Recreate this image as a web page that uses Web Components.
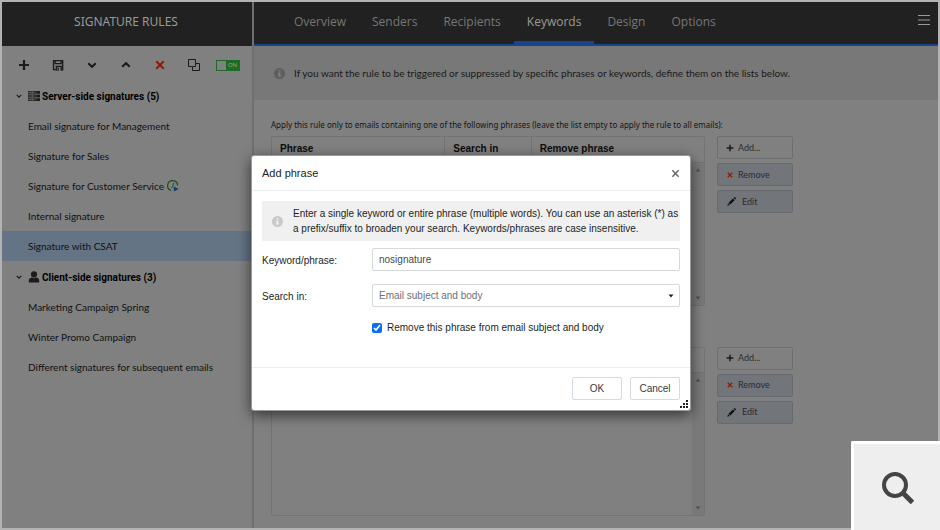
<!DOCTYPE html>
<html lang="en">
<head>
<meta charset="utf-8">
<title>Signature rules</title>
<style>
html, body { margin: 0; }
body { font-family: Lato, "Open Sans", sans-serif; font-size: 10px; line-height: 15px; color: #121212; background: #808080; }
</style>
</head>
<body>
<app-shell>
  <rules-sidebar slot="side" heading="SIGNATURE RULES">
    <rule-group heading="Server-side signatures (5)" icon="server">
      <rule-item>Email signature for Management</rule-item>
      <rule-item>Signature for Sales</rule-item>
      <rule-item icon="timer">Signature for Customer Service</rule-item>
      <rule-item>Internal signature</rule-item>
      <rule-item selected>Signature with CSAT</rule-item>
    </rule-group>
    <rule-group heading="Client-side signatures (3)" icon="person">
      <rule-item>Marketing Campaign Spring</rule-item>
      <rule-item>Winter Promo Campaign</rule-item>
      <rule-item>Different signatures for subsequent emails</rule-item>
    </rule-group>
  </rules-sidebar>
  <tab-bar>
    <tab-link>Overview</tab-link><tab-link>Senders</tab-link><tab-link>Recipients</tab-link><tab-link active>Keywords</tab-link><tab-link>Design</tab-link><tab-link>Options</tab-link>
  </tab-bar>
  <info-strip>If you want the rule to be triggered or suppressed by specific phrases or keywords, define them on the lists below.</info-strip>
  <phrase-section>Apply this rule only to emails containing one of the following phrases (leave the list empty to apply the rule to all emails):</phrase-section>
  <phrase-section></phrase-section>
  <phrase-dialog slot="over"></phrase-dialog>
  <zoom-corner slot="over"></zoom-corner>
</app-shell>

<script>
const define = (name, html, setup) => {
  const template = document.createElement('template');
  template.innerHTML = html;
  customElements.define(name, class extends HTMLElement {
    constructor() {
      super();
      this.attachShadow({ mode: 'open' }).append(template.content.cloneNode(true));
    }
    connectedCallback() { if (setup) setup(this, this.shadowRoot); }
  });
};

const icons = {
  plus: ['0 0 12 12', '<path d="M6 1v10M1 6h10" stroke="currentColor" stroke-width="2.2"/>'],
  save: ['0 0 12 12', '<path d="M3.500 10.700H1.500V1.700h9.200v9.200H9.400M3.200 1.500v3.200h5.900V1.500M4.300 11.700V7.300h4.900v4.400M6.200 8.500v3.200" fill="none" stroke="currentColor" stroke-width="1.3"/>'],
  down: ['0 0 10 10', '<path d="M1.2 3.2 5 6.8l3.800-3.6" fill="none" stroke="currentColor" stroke-width="2"/>'],
  up: ['0 0 10 10', '<path d="M1.2 6.800 5 3.2l3.800 3.6" fill="none" stroke="currentColor" stroke-width="2"/>'],
  cross: ['0 0 10 10', '<path d="m1.300 1.300 7.400 7.400m0-7.400-7.400 7.400" stroke="currentColor" stroke-width="2.200"/>'],
  thin: ['0 0 10 10', '<path d="m1.500 1.500 7 7m0-7-7 7" stroke="currentColor" stroke-width="1.600"/>'],
  copy: ['0 0 12 12', '<path d="M4.500 7.500h-4v-7h7v4M5 7.500H7.500V5M7.500 4.500h4v7h-7v-4" fill="none" stroke="currentColor" stroke-width="1"/>'],
  pencil: ['0 0 10 10', '<path d="M.3 9.700 1.200 7l1.900 1.900zM1.800 6.400l4.800-4.700 1.800 1.800-4.800 4.800zM7.200 1.100 8 .3q.5-.3 1 .1l.700.700q.4.500 0 1L9 2.900z" fill="currentColor"/>'],
  server: ['0 0 12 12', '<path d="M0 1h12v2.800H0zM0 4.600h12v2.800H0zM0 8.200h12V11H0z" fill="currentColor"/><path d="M.5 2.400h6M.5 6h6M.5 9.600h6" stroke="#808080" stroke-width="1.200" stroke-dasharray="1 .6"/><path d="M4.200 0v12M8 0v12" stroke="#6a6a6a" stroke-width=".6"/>'],
  person: ['0 0 12 12', '<circle cx="6" cy="3.400" r="3.100" fill="currentColor"/><path d="M.8 11.600V9.300q0-2.300 2.700-2.700 2.500 1.200 5 0 2.700.400 2.700 2.700v2.300z" fill="currentColor"/>'],
  timer: ['0 0 12 12', '<path d="M4 10.400A5 5 0 1 1 10.600 5.500" fill="none" stroke="#1b5225" stroke-width="1.300"/><path d="M6.800 3 5.600 6.500 4.300 8" fill="none" stroke="#1b5225" stroke-width="1"/><path d="M6.800 6.500 11.600 9l-4.800 2.600z" fill="#0d3a70"/>'],
  info: ['0 0 12 12', '<circle cx="6" cy="6" r="6" fill="currentColor"/><path d="M5.200 2.400h1.700v1.500H5.200zM4.500 4.900h2.400v3.300h.8v1.100H4.400V8.200h.8V6h-.7z" fill="var(--hole)"/>'],
  menu: ['0 0 12 12', '<path d="M0 1.500h12M0 6h12M0 10.500h12" stroke="currentColor" stroke-width="1.200"/>'],
  caretup: ['0 0 6 6', '<path d="M.5 4.500h5L3 1.500z" fill="currentColor"/>'],
  caretdown: ['0 0 6 6', '<path d="M.500 1.500h5l-2.500 3z" fill="currentColor"/>'],
  grip: ['0 0 8 8', '<path d="M6 0h2v2H6zM6 3h2v2H6zM3 3h2v2H3zM0 6h2v2H0zM3 6h2v2H3zM6 6h2v2H6z" fill="currentColor"/>'],
  search: ['0 0 32 32', '<circle cx="13" cy="13" r="11" fill="none" stroke="currentColor" stroke-width="4"/><path d="m20 20 10.500 10.500" stroke="currentColor" stroke-width="5"/>']
};
define('app-icon', `<style>
  :host { display: inline-block; width: 12px; height: 12px; flex: none; }
  svg { display: block; width: 100%; height: 100%; }
</style><svg aria-hidden="true"></svg>`, (el, root) => {
  const [box, body] = icons[el.getAttribute('name')];
  const svg = root.querySelector('svg');
  svg.setAttribute('viewBox', box);
  svg.innerHTML = body;
});

define('app-shell', `<style>
  :host { display: grid; grid-template-columns: 250px 1fr; position: relative; box-sizing: border-box;
    min-height: 100vh; border: 2px solid #b3b3b3; background: #808080; }
  main { border-left: 2px solid #707070; min-width: 0; }
</style><slot name="side"></slot><main><slot></slot></main><slot name="over"></slot>`);

define('rules-sidebar', `<style>
  :host { display: block; }
  h1 { margin: 0; height: 44px; display: flex; align-items: center; justify-content: center; padding: 0 2px 5px 0; box-sizing: border-box;
    background: #212121; color: #999; font: 12px/16px "Noto Sans", sans-serif; }
  nav { display: grid; grid-template-columns: repeat(7, 1fr); justify-items: center; align-items: center; height: 34px; padding: 4px 7px 0 5px; box-sizing: border-box; color: #1a1a1a; }
  button { border: 0; padding: 0; background: none; color: inherit; display: flex; }
  .s { width: 10px; height: 10px; }
  .red { color: #8f1d05; }
  .toggle { width: 24px; height: 11px; border: 1px solid #1f6b25; box-sizing: border-box; }
  .toggle i { width: 9px; }
  .toggle span { flex: 1; background: #1f6b25; color: #83a886; font: 6px/9px "Noto Sans", sans-serif; text-align: center; }
</style>
<h1></h1>
<nav aria-label="Rule actions">
  <button aria-label="New"><app-icon name="plus"></app-icon></button>
  <button aria-label="Save"><app-icon name="save"></app-icon></button>
  <button aria-label="Move down"><app-icon class="s" name="down"></app-icon></button>
  <button aria-label="Move up"><app-icon class="s" name="up"></app-icon></button>
  <button aria-label="Delete" class="red"><app-icon class="s" name="cross"></app-icon></button>
  <button aria-label="Duplicate"><app-icon name="copy"></app-icon></button>
  <button class="toggle" role="switch" aria-checked="true"><i></i><span>ON</span></button>
</nav>
<slot></slot>`, (el, root) => { root.querySelector('h1').textContent = el.getAttribute('heading'); });

define('rule-group', `<style>
  :host { display: block; }
  h2 { margin: 0; height: 31px; padding: 1px 0 0 14px; box-sizing: border-box; display: flex; align-items: center; color: #000;
    font: bold 10px/15px Roboto, sans-serif; gap: 2px; }
  .c { width: 6px; height: 6px; margin-right: 4px; color: #1a1a1a; }
  .k { color: #1c1c1c; }
</style><h2><app-icon class="c" name="down"></app-icon><span></span></h2><slot></slot>`, (el, root) => {
  const icon = document.createElement('app-icon');
  icon.setAttribute('name', el.getAttribute('icon'));
  icon.className = 'k';
  const label = root.querySelector('span');
  label.before(icon);
  label.textContent = el.getAttribute('heading');
});

define('rule-item', `<style>
  :host { display: block; }
  a { display: flex; align-items: center; gap: 3px; height: 30px; padding-left: 26px; color: #101010; text-decoration: none; }
  :host([selected]) a { background: #647484; }
</style><a href="#"><slot></slot></a>`, (el, root) => {
  if (!el.hasAttribute('icon')) return;
  const icon = document.createElement('app-icon');
  icon.setAttribute('name', el.getAttribute('icon'));
  root.querySelector('a').append(icon);
});

define('tab-bar', `<style>
  :host { display: flex; height: 44px; box-sizing: border-box; padding: 0 8px 0 27px; background: #212121; border-bottom: 2px solid #17468a; }
  button { margin: 0 0 6px auto; padding: 0; border: 0; background: none; color: #999; display: flex; align-items: center; }
</style><slot></slot><button aria-label="Menu"><app-icon name="menu"></app-icon></button>`);

define('tab-link', `<style>
  :host { display: flex; }
  a { display: flex; align-items: center; padding: 0 13px; color: #777; text-decoration: none; font: 12px/16px "Open Sans", sans-serif; border-bottom: 3px solid transparent; }
  :host([active]) a { color: #999; border-color: #17468a; }
</style><a href="#"><slot></slot></a>`);

define('info-strip', `<style>
  :host { display: flex; align-items: center; gap: 9px; height: 54px; padding: 0 20px; background: #787878; color: #181818; }
  app-icon { color: #5e5e5e; --hole: #858585; width: 11px; height: 11px; }
</style><app-icon name="info"></app-icon><span><slot></slot></span>`);

define('action-button', `<style>
  :host { display: block; }
  button { display: flex; align-items: center; gap: 4px; width: 100%; height: 23px; padding: 0 8px; box-sizing: border-box;
    border: 1px solid #6c6e70; border-radius: 2px; background: #808080; color: #2a2c2f; font: 9px/14px Lato, sans-serif; }
  :host([muted]) button { background: #72757a; border-color: #66696f; }
  app-icon { width: 8px; height: 8px; color: #1a1a1a; }
  app-icon[name=cross] { width: 6px; height: 6px; color: #8f1d05; margin: 0 1px; }
  app-icon[name=pencil] { width: 9px; height: 9px; margin: 0 2px 0 1px; color: #111; }
</style><button><slot></slot></button>`, (el, root) => {
  const icon = document.createElement('app-icon');
  icon.setAttribute('name', el.getAttribute('icon'));
  root.querySelector('button').prepend(icon);
});

define('phrase-section', `<style>
  :host { display: block; padding: 18px 17px 5px; }
  p { margin: 0 0 4px; height: 14px; font: 8px/14px "Noto Sans", sans-serif; color: #141414; white-space: nowrap; }
  .row { display: grid; grid-template-columns: 434px 76px; gap: 12px; align-items: start; }
  .list { border: 1px solid #737373; border-radius: 2px; }
  table { width: 100%; border-collapse: collapse; table-layout: fixed; }
  th { height: 25px; padding: 0 8px; text-align: left; font: bold 10px/14px "Liberation Sans", sans-serif; color: #0c0c0c;
    border-bottom: 1px solid #737373; box-sizing: border-box; }
  th + th { border-left: 1px solid #737373; }
  .body { height: 142px; display: flex; }
  .track { margin-left: auto; width: 12px; background: #797979; display: flex; flex-direction: column; align-items: center; justify-content: space-between; padding: 4px 0; box-sizing: border-box; color: #505050; }
  .track app-icon { width: 6px; height: 6px; }
  .actions { display: grid; gap: 4px; }
</style>
<p><slot></slot></p>
<div class="row">
  <div class="list">
    <table><colgroup><col style="width:40%"><col style="width:20%"><col style="width:40%"></colgroup>
      <thead><tr><th>Phrase</th><th>Search in</th><th>Remove phrase</th></tr></thead></table>
    <div class="body"><div class="track"><app-icon name="caretup"></app-icon><app-icon name="caretdown"></app-icon></div></div>
  </div>
  <div class="actions">
    <action-button icon="plus">Add...</action-button>
    <action-button icon="cross" muted>Remove</action-button>
    <action-button icon="pencil" muted>Edit</action-button>
  </div>
</div>`, (el, root) => {
  if (!el.textContent.trim()) root.querySelectorAll('th').forEach(cell => { cell.textContent = ''; });
});

define('phrase-dialog', `<style>
  :host { position: absolute; inset: 0; display: flex; justify-content: center; align-items: flex-start; padding: 153px 0 0 2px; }
  section { width: 440px; box-sizing: border-box; position: relative; background: #fff; border: 1px solid #999; border-radius: 3px;
    box-shadow: 0 4px 14px rgba(0,0,0,.6); color: #1c1f22; font: 10px/15px "Liberation Sans", sans-serif; }
  header { display: flex; align-items: center; justify-content: space-between; height: 35px; box-sizing: border-box; padding: 0 10px; border-bottom: 1px solid #ededed; }
  h2 { margin: 0; font: 11px/16px "Liberation Sans", sans-serif; }
  button, input, select { font: inherit; box-sizing: border-box; }
  .close { border: 0; background: none; padding: 0; display: flex; color: #666; }
  .close app-icon { width: 9px; height: 9px; }
  form { padding: 10px; height: 176px; box-sizing: border-box; }
  .note { display: flex; align-items: center; gap: 10px; min-height: 40px; padding: 0 0 0 10px; background: #f0f0f0; margin-bottom: 7px; }
  .note app-icon { width: 11px; height: 11px; color: #c9c9c9; --hole: #f5f5f5; }
  .field { display: grid; grid-template-columns: 110px 1fr; align-items: center; margin-bottom: 13px; }
  .field label { padding-top: 2px; }
  .field input, select { width: 100%; height: 23px; border: 1px solid #d5d9dd; border-radius: 2px; padding: 0 6px; background: #fff; color: #444a50; outline: 0; }
  select { appearance: none; color: #697078; }
  .pick { position: relative; display: flex; }
  .pick app-icon { position: absolute; right: 6px; top: 9px; width: 6px; height: 6px; color: #222; pointer-events: none; }
  .check { display: flex; align-items: center; gap: 5px; margin: 13px 0 0 110px; }
  .check input { margin: 0; width: 10px; height: 10px; accent-color: #0b6cf5; }
  footer { display: flex; justify-content: flex-end; gap: 8px; padding: 9px 10px 10px; border-top: 1px solid #ededed; }
  footer button { width: 50px; height: 23px; padding: 0; border: 1px solid #d3dae0; border-radius: 2px; background: #fff; color: #343a40; }
  .grip { position: absolute; right: 2px; bottom: 2px; width: 8px; height: 8px; color: #222; }
</style>
<section role="dialog" aria-labelledby="t">
  <header><h2 id="t">Add phrase</h2><button class="close" aria-label="Close"><app-icon name="thin"></app-icon></button></header>
  <form>
    <div class="note"><app-icon name="info"></app-icon><span>Enter a single keyword or entire phrase (multiple words). You can use an asterisk (*) as<br>a prefix/suffix to broaden your search. Keywords/phrases are case insensitive.</span></div>
    <div class="field"><label for="k">Keyword/phrase:</label><input id="k" type="text" value="nosignature"></div>
    <div class="field"><label for="s">Search in:</label><div class="pick"><select id="s"><option>Email subject and body</option></select><app-icon name="caretdown"></app-icon></div></div>
    <div class="check"><input id="r" type="checkbox" checked><label for="r">Remove this phrase from email subject and body</label></div>
  </form>
  <footer><button type="button">OK</button><button type="button">Cancel</button></footer>
  <app-icon class="grip" name="grip"></app-icon>
</section>`);

define('zoom-corner', `<style>
  :host { position: absolute; right: -2px; bottom: -2px; }
  button { display: flex; align-items: center; justify-content: center; width: 89px; height: 89px; box-sizing: border-box; padding: 1px 0 0 2px;
    border: solid #fff; border-width: 3px 0 0 3px; border-radius: 2px 0 0 0; background: #eee; color: #444; }
  app-icon { width: 32px; height: 32px; }
</style><button aria-label="Zoom"><app-icon name="search"></app-icon></button>`);
</script>
</body>
</html>
